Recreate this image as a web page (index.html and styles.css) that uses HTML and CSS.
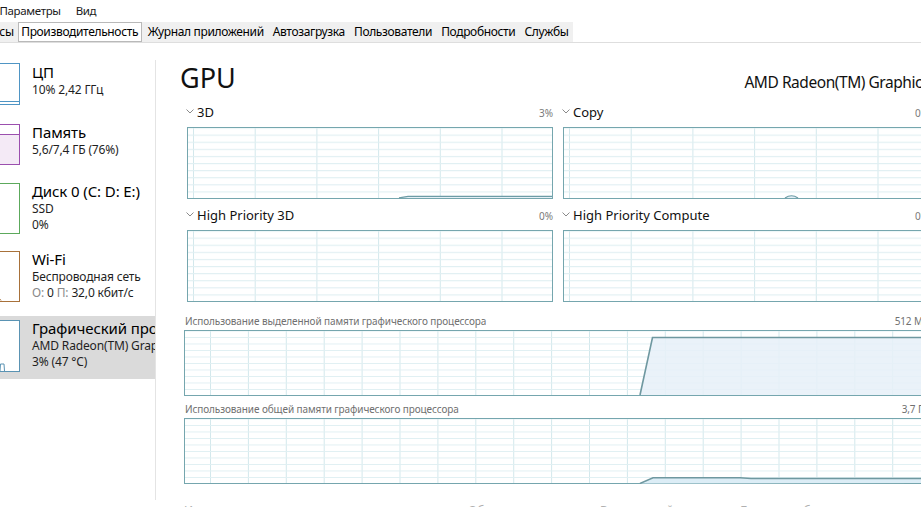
FILE: index.html
```html
<!DOCTYPE html>
<html lang="ru">
<head>
<meta charset="utf-8">
<title>Диспетчер задач</title>
<link rel="stylesheet" href="styles.css">
</head>
<body>
<div class="menubar">
  <span class="menu">Параметры</span>
  <span class="menu">Вид</span>
</div>
<div class="tabbar">
  <div class="tabs">
    <span class="tab">Процессы</span>
    <span class="tab active">Производительность</span>
    <span class="tab">Журнал приложений</span>
    <span class="tab">Автозагрузка</span>
    <span class="tab">Пользователи</span>
    <span class="tab">Подробности</span>
    <span class="tab">Службы</span>
  </div>
</div>
<div class="content">
  <aside class="sidebar">
    <div class="list">
      <div class="item i-cpu">
        <svg class="thumb" width="52" height="42" viewBox="0 0 52 42">
          <rect x="0.5" y="0.5" width="51" height="41" fill="#fff" stroke="#4f95c4"/>
          <path d="M28 41 L28.5 30 L29.5 18 L30.5 33 L31.5 38.5 L51 38.5" fill="none" stroke="#4f95c4" stroke-width="1"/>
        </svg>
        <div class="info"><div class="title">ЦП</div><div class="sub">10% 2,42 ГГц</div></div>
      </div>
      <div class="item i-mem">
        <svg class="thumb" width="52" height="41" viewBox="0 0 52 41">
          <rect x="0.5" y="0.5" width="51" height="40" fill="#fff" stroke="#9b4fae"/>
          <rect x="1" y="10" width="50" height="30" fill="#f4eaf6"/>
          <path d="M1 10.5 H51" stroke="#9b4fae"/>
        </svg>
        <div class="info"><div class="title">Память</div><div class="sub">5,6/7,4 ГБ (76%)</div></div>
      </div>
      <div class="item tall i-disk">
        <svg class="thumb" width="52" height="51" viewBox="0 0 52 51">
          <rect x="0.5" y="0.5" width="51" height="50" fill="#fff" stroke="#5ca95c"/>
        </svg>
        <div class="info"><div class="title">Диск 0 (C: D: E:)</div><div class="sub">SSD</div><div class="sub">0%</div></div>
      </div>
      <div class="item tall i-wifi">
        <svg class="thumb" width="52" height="51" viewBox="0 0 52 51">
          <rect x="0.5" y="0.5" width="51" height="50" fill="#fff" stroke="#a8713a"/>
          <path d="M30 50 L31 47 L33 49.5" fill="none" stroke="#a8713a"/>
        </svg>
        <div class="info"><div class="title">Wi-Fi</div><div class="sub">Беспроводная сеть</div><div class="sub"><span class="dim">О:</span> 0 <span class="dim">П:</span> 32,0 кбит/с</div></div>
      </div>
      <div class="item tall sel i-gpu">
        <svg class="thumb" width="52" height="52" viewBox="0 0 52 52">
          <rect x="0.5" y="0.5" width="51" height="51" fill="#fff" stroke="#5a93b3"/>
          <path d="M32 51 L32.5 44 L36 44 L36.5 51" fill="none" stroke="#5a93b3"/>
        </svg>
        <div class="info"><div class="title">Графический процессор 0</div><div class="sub">AMD Radeon(TM) Graphics</div><div class="sub">3% (47 °C)</div></div>
      </div>
    </div>
  </aside>
  <main class="main">
    <div class="header">
      <h1 class="gpu-title">GPU</h1>
      <div class="model">AMD Radeon(TM) Graphics</div>
    </div>
    <div class="engines">
      <div class="engine">
        <div class="elabel"><svg class="chev" width="8" height="5" viewBox="0 0 8 5"><path d="M0.5 0.5 L4 4 L7.5 0.5" fill="none" stroke="#8a8a8a"/></svg><span class="ename">3D</span><span class="pct">3%</span></div>
        <svg class="graph" width="366" height="72" viewBox="0 0 366 72">
          <defs>
            <pattern id="gA" width="61.7" height="7.1" patternUnits="userSpaceOnUse" x="6" y="0.5">
              <path d="M0.5 0 V7.1" stroke="#d3e8ec"/><path d="M0 0.5 H61.7" stroke="#e0eff2"/>
            </pattern>
          </defs>
          <rect x="0.5" y="0.5" width="365" height="71" fill="url(#gA)" stroke="#75a6ae"/>
          <path d="M214 71 L221 69.5 L365 69.5 L365 71 Z" fill="#e3eff6"/>
          <path d="M212 70.8 L221 69.3 L365 69.3" fill="none" stroke="#6c9ca6" stroke-width="1.3"/>
        </svg>
      </div>
      <div class="engine">
        <div class="elabel"><svg class="chev" width="8" height="5" viewBox="0 0 8 5"><path d="M0.5 0.5 L4 4 L7.5 0.5" fill="none" stroke="#8a8a8a"/></svg><span class="ename">Copy</span><span class="pct">0%</span></div>
        <svg class="graph" width="366" height="72" viewBox="0 0 366 72">
          <defs>
            <pattern id="gB" width="61.7" height="7.1" patternUnits="userSpaceOnUse" x="6" y="0.5">
              <path d="M0.5 0 V7.1" stroke="#d3e8ec"/><path d="M0 0.5 H61.7" stroke="#e0eff2"/>
            </pattern>
          </defs>
          <rect x="0.5" y="0.5" width="365" height="71" fill="url(#gB)" stroke="#75a6ae"/>
          <path d="M222 71 Q228.5 66.5 235 71" fill="#e3eff6" stroke="#6c9ca6" stroke-width="1.2"/>
        </svg>
      </div>
      <div class="engine">
        <div class="elabel"><svg class="chev" width="8" height="5" viewBox="0 0 8 5"><path d="M0.5 0.5 L4 4 L7.5 0.5" fill="none" stroke="#8a8a8a"/></svg><span class="ename">High Priority 3D</span><span class="pct">0%</span></div>
        <svg class="graph" width="366" height="72" viewBox="0 0 366 72">
          <defs>
            <pattern id="gC" width="61.7" height="7.1" patternUnits="userSpaceOnUse" x="6" y="0.5">
              <path d="M0.5 0 V7.1" stroke="#d3e8ec"/><path d="M0 0.5 H61.7" stroke="#e0eff2"/>
            </pattern>
          </defs>
          <rect x="0.5" y="0.5" width="365" height="71" fill="url(#gC)" stroke="#75a6ae"/>
        </svg>
      </div>
      <div class="engine">
        <div class="elabel"><svg class="chev" width="8" height="5" viewBox="0 0 8 5"><path d="M0.5 0.5 L4 4 L7.5 0.5" fill="none" stroke="#8a8a8a"/></svg><span class="ename">High Priority Compute</span><span class="pct">0%</span></div>
        <svg class="graph" width="366" height="72" viewBox="0 0 366 72">
          <defs>
            <pattern id="gD" width="61.7" height="7.1" patternUnits="userSpaceOnUse" x="6" y="0.5">
              <path d="M0.5 0 V7.1" stroke="#d3e8ec"/><path d="M0 0.5 H61.7" stroke="#e0eff2"/>
            </pattern>
          </defs>
          <rect x="0.5" y="0.5" width="365" height="71" fill="url(#gD)" stroke="#75a6ae"/>
        </svg>
      </div>
    </div>
    <div class="mem">
      <div class="mlabel"><span>Использование выделенной памяти графического процессора</span><span>512 МБ</span></div>
      <svg class="mgraph" width="745" height="66" viewBox="0 0 745 66">
        <defs>
          <pattern id="gM1" width="37.9" height="6.5" patternUnits="userSpaceOnUse" x="26" y="0.5">
            <path d="M0.5 0 V6.5" stroke="#d3e8ec"/><path d="M0 0.5 H37.9" stroke="#e0eff2"/>
          </pattern>
        </defs>
        <rect x="0.5" y="0.5" width="744" height="65" fill="url(#gM1)" stroke="#75a6ae"/>
        <path d="M456 65 L468.5 7.5 L744 7.5 L744 65 Z" fill="#e6f0f8" fill-opacity="0.85"/>
        <path d="M456 65 L468.5 7.5 L745 7.5" fill="none" stroke="#6f98a0" stroke-width="1.6"/>
      </svg>
      <div class="mlabel second"><span>Использование общей памяти графического процессора</span><span>3,7 ГБ</span></div>
      <svg class="mgraph" width="745" height="66" viewBox="0 0 745 66">
        <defs>
          <pattern id="gM2" width="37.9" height="6.5" patternUnits="userSpaceOnUse" x="26" y="0.5">
            <path d="M0.5 0 V6.5" stroke="#d3e8ec"/><path d="M0 0.5 H37.9" stroke="#e0eff2"/>
          </pattern>
        </defs>
        <rect x="0.5" y="0.5" width="744" height="65" fill="url(#gM2)" stroke="#75a6ae"/>
        <path d="M456 65.5 L469 59.8 L556 59.8 L567 60.6 L744 60.6 L744 65 Z" fill="#dcedf6"/>
        <path d="M456 65.5 L469 59.8 L556 59.8 L567 60.6 L745 60.6" fill="none" stroke="#6f98a0" stroke-width="1.5"/>
      </svg>
    </div>
    <div class="stats">
      <span class="s1">Использование</span>
      <span class="s2">Общая память</span>
      <span class="s3">Версия драйвера:</span>
      <span class="s4">Дата разработки:</span>
    </div>
  </main>
</div>
</body>
</html>
```

FILE: styles.css
```css
* { box-sizing: border-box; margin: 0; padding: 0; }
html, body { width: 921px; height: 521px; overflow: hidden; background: #fff; }
body {
  font-family: "Segoe UI", "Noto Sans", "Open Sans", sans-serif;
  color: #000;
  font-size: 12px;
}

/* menu */
.menubar { display: flex; height: 22px; align-items: center; margin-left: -8px; }
.menu { padding: 0 7.5px; font-size: 11.5px; letter-spacing: -0.35px; line-height: 16px; color: #1a1a1a; }

/* tabs */
.tabbar { height: 21px; border-bottom: 1px solid #dedede; display: flex; }
.tabs { display: flex; align-items: center; background: #f0f0f0; margin-left: -46px; height: 20px; }
.tab { padding: 0 3.5px; line-height: 18px; border: 1px solid transparent; color: #000; white-space: nowrap; letter-spacing: -0.35px; }
.tab.active { background: #fff; border-color: #b9b9b9; padding: 0 3px 0 2px; margin-right: 1px; }

/* layout */
.content { display: flex; height: 478px; }

/* sidebar */
.sidebar { width: 156px; flex: none; padding-top: 17px; }
.list { border-right: 1px solid #e4e4e4; height: 440px; overflow: hidden; }
.item { display: flex; gap: 12px; height: 60px; padding-top: 2px; white-space: nowrap; overflow: hidden; }
.item.i-mem { height: 59px; }
.item.tall { height: 68px; }
.item.i-wifi { height: 69px; }
.item.sel { background: #dadada; height: 63px; }
.thumb { flex: none; margin-left: -32px; margin-top: 1px; display: block; }
.i-mem .thumb, .tall .thumb { margin-top: 2px; }
.info { min-width: 0; }
.title { font-size: 15px; line-height: 20px; color: #000; letter-spacing: -0.1px; }
.sub { font-size: 12px; line-height: 16px; color: #1f1f1f; letter-spacing: -0.15px; }
.dim { color: #8a8a8a; }

/* main */
.main { flex: none; width: 773px; padding: 17px 0 0 28px; }
.header { display: flex; justify-content: space-between; align-items: baseline; height: 36px; white-space: nowrap; }
.gpu-title { font-size: 27px; font-weight: 400; line-height: 36px; color: #111; margin-left: -4px; }
.model { font-size: 15.5px; letter-spacing: -0.45px; color: #111; }

.engines {
  display: grid;
  grid-template-columns: 367px 367px;
  column-gap: 9px;
  row-gap: 7px;
  margin: 7px 0 0 2px;
}
.elabel { display: flex; align-items: baseline; height: 18px; line-height: 18px; font-size: 13px; margin-bottom: 6px; white-space: nowrap; }
.chev { flex: none; margin-right: 3px; align-self: center; margin-top: -2px; }
.ename { color: #111; }
.pct { margin-left: auto; font-size: 10px; color: #7a7a7a; }
.graph { display: block; margin-left: 1px; }

.mem { margin-top: 12px; }
.mlabel { display: flex; justify-content: space-between; font-size: 10px; letter-spacing: -0.1px; line-height: 14px; color: #707070; margin: 0 0 2px 1px; white-space: nowrap; }
.mlabel.second { margin-top: 6px; }
.mgraph { display: block; }

.stats { display: flex; height: 5px; overflow: hidden; margin-top: 18px; font-size: 12px; line-height: 16px; color: #b0b0b0; white-space: nowrap; }
.stats span { padding-top: 1px; }
.s1 { width: 284px; }
.s2 { width: 132px; }
.s3 { width: 139px; }
.s4 { width: 120px; }
```
